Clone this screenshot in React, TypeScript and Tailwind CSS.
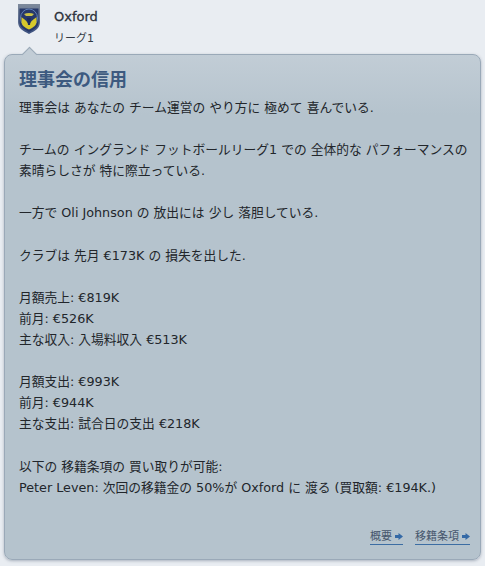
const font = { fontFamily: '"DejaVu Sans", "Noto Sans CJK JP", sans-serif' };

function Crest() {
  return (
    <svg width="24" height="32" viewBox="0 0 24 32">
      <defs>
        <linearGradient id="rim" x1="0" y1="0" x2="0" y2="1">
          <stop offset="0" stopColor="#7d8a9c" />
          <stop offset="1" stopColor="#3a4f7e" />
        </linearGradient>
      </defs>
      <path d="M1 1h22v18c0 6-5 9-11 12C6 28 1 25 1 19z" fill="url(#rim)" />
      <path d="M2.500 5.500h19v13.500c0 5-4 7.500-9.500 10C7 26.500 2.500 24 2.500 19z" fill="#26386a" />
      <ellipse cx="12" cy="15" rx="8.500" ry="9" fill="none" stroke="#5f7fb5" strokeWidth="1" />
      <path d="M4.500 14c2 2 5 3 7.500 8 2.500-5 5.500-6 7.500-8v5c0 3-3 5.500-7.500 7.500-4.500-2-7.500-4.500-7.500-7.500z" fill="#d6c92c" />
      <path d="M7 11c3-1.500 7-1.500 10 0l-2 2H9z" fill="#c9c24a" />
      <path d="M10 15h4l-1 7h-2z" fill="#1e2d5a" />
    </svg>
  );
}

function Line({ children }: { children?: string }) {
  return <p className="h-[21.1px] leading-[21.1px] whitespace-nowrap">{children}</p>;
}

function Link({ children }: { children: string }) {
  return (
    <a href="#" className="flex items-center gap-[3px] border-b border-[#3c6da3] text-[11px] leading-[14px] text-[#46566c]">
      {children}
      <svg width="8" height="8" viewBox="0 0 8 8">
        <path d="M0 2h3.500V0L8 3.500 3.500 7V5H0z" fill="#3469a6" />
      </svg>
    </a>
  );
}

export default function App() {
  return (
    <div className="h-[566px] w-[485px] overflow-hidden bg-[#e9edf2] text-[#22262b]" style={font}>
      <div className="flex h-[54px] pl-[17px]">
        <div className="pt-[3px]"><Crest /></div>
        <div className="pl-[13px] pt-[9px]">
          <p className="text-[13px] leading-[16px] text-[#2c323b] [-webkit-text-stroke:0.3px_#2c323b]">Oxford</p>
          <p className="mt-[6px] text-[11px] leading-[15px] text-[#333a44]">リーグ1</p>
        </div>
      </div>
      <div className="relative mx-1 h-[506px] rounded-lg border border-[#9aa9b8] bg-gradient-to-b from-[#c2cdd6] to-[#b5c3cd] to-[60px] px-[14px] pt-[11px] text-[12.75px] shadow-[0_1px_3px_rgba(90,105,125,0.45)]">
        <div className="absolute left-[19px] top-[-6px] size-[11px] rotate-45 border-l border-t border-[#9aa9b8] bg-[#c2cdd6]" />
        <h2 className="relative h-[28px] text-lg font-bold leading-[28px] text-[#3d5a80]">理事会の信用</h2>
        <div className="mt-[3px]">
          <Line>理事会は あなたの チーム運営の やり方に 極めて 喜んでいる.</Line>
          <Line />
          <Line>チームの イングランド フットボールリーグ1 での 全体的な パフォーマンスの</Line>
          <Line>素晴らしさが 特に際立っている.</Line>
          <Line />
          <Line>一方で Oli Johnson の 放出には 少し 落胆している.</Line>
          <Line />
          <Line>クラブは 先月 €173K の 損失を出した.</Line>
          <Line />
          <Line>月額売上: €819K</Line>
          <Line>前月: €526K</Line>
          <Line>主な収入: 入場料収入 €513K</Line>
          <Line />
          <Line>月額支出: €993K</Line>
          <Line>前月: €944K</Line>
          <Line>主な支出: 試合日の支出 €218K</Line>
          <Line />
          <Line>以下の 移籍条項の 買い取りが可能:</Line>
          <Line>Peter Leven: 次回の移籍金の 50%が Oxford に 渡る (買取額: €194K.)</Line>
        </div>
        <div className="absolute bottom-[14px] right-[10px] flex gap-3">
          <Link>概要</Link>
          <Link>移籍条項</Link>
        </div>
      </div>
    </div>
  );
}
